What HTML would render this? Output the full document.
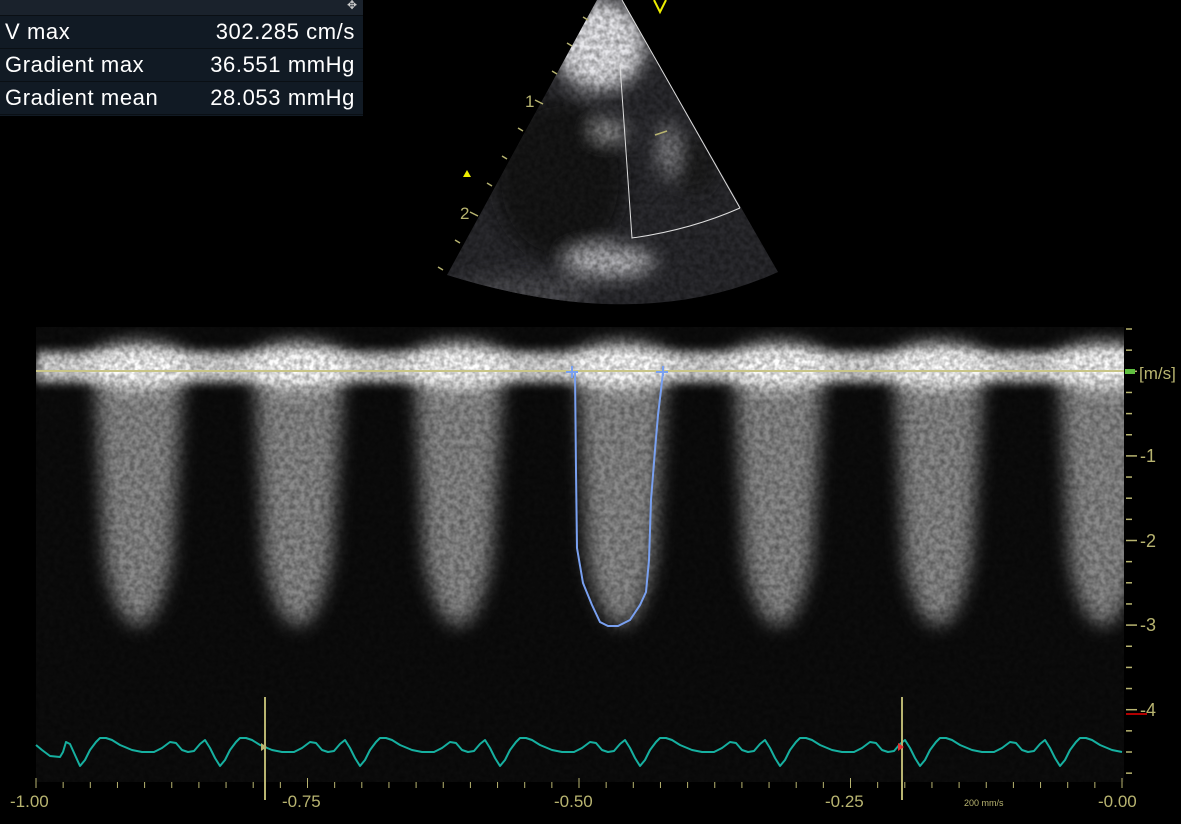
<!DOCTYPE html>
<html><head><meta charset="utf-8">
<style>
html,body{margin:0;padding:0;background:#000;width:1181px;height:824px;overflow:hidden;font-family:"Liberation Sans",sans-serif}
#tbl{position:absolute;left:0;top:0;width:363px;height:116px;background:#111a24}
#tbl .hdr{height:15px;background:#1a222c;border-bottom:1px solid #0a0f14;position:relative}
#tbl .row{height:32px;border-bottom:1px solid #0a0f14;color:#fff;font-size:22px;line-height:32px;position:relative;letter-spacing:0.6px}
#tbl .row span{position:absolute}
#tbl .l{left:5px}#tbl .r{right:8px}
svg{position:absolute;left:0;top:0}
.ax{fill:#b8b470}
</style></head><body>
<svg width="1181" height="824" viewBox="0 0 1181 824">
<defs>
<filter id="bl" x="-20%" y="-20%" width="140%" height="140%"><feGaussianBlur stdDeviation="9"/></filter>
<filter id="bl2" x="-5%" y="-50%" width="110%" height="200%"><feGaussianBlur stdDeviation="5"/></filter>
<filter id="bl3" x="-30%" y="-60%" width="160%" height="220%"><feGaussianBlur stdDeviation="9"/></filter>
<filter id="noise" x="0" y="0" width="100%" height="100%">
<feTurbulence type="fractalNoise" baseFrequency="0.2" numOctaves="2" seed="3"/>
<feColorMatrix type="matrix" values="0 0 0 0 0  0 0 0 0 0  0 0 0 0 0  0 0 0 -1.4 1.0"/>
</filter>
<clipPath id="dop"><rect x="36" y="327" width="1088" height="455"/></clipPath>
<clipPath id="fan"><path d="M597 0 L622 0 L778 272 Q640 335 447 275 Z"/></clipPath>
</defs>
<g clip-path="url(#dop)">
<rect x="36" y="327" width="1088" height="455" fill="#0c0c0c"/>
<g id="peaks" fill="#8a8a8a" filter="url(#bl)"></g>
<rect x="36" y="352" width="1088" height="30" fill="#fff" filter="url(#bl2)" opacity="0.85"/>
<g id="tops" fill="#fff" filter="url(#bl3)"></g>
<rect x="36" y="327" width="1088" height="455" filter="url(#noise)" opacity="0.45"/>
</g>
<line x1="36" y1="371" x2="1124" y2="371" stroke="#c8c488" stroke-width="2"/>
<path d="M575 372 L576 470 L577 548 L583 583 L592 605 L600 622 L608 626 L618 626 L630 620 L640 605 L646 592 L649 560 L651 500 L655 450 L658 415 L661 390 L663 372" fill="none" stroke="#79a0f0" stroke-width="2"/>
<path d="M566 372 h12 M572 366 v12 M656 372 h12 M663 366 v10" stroke="#79a0f0" stroke-width="2"/>
<g id="rt" stroke="#b8b470" stroke-width="1.5"></g>
<rect x="1125" y="369" width="10" height="5" fill="#5fbf3f"/>
<line x1="1126" y1="714" x2="1147" y2="714" stroke="#e00" stroke-width="1.5"/>
<text x="1139" y="379" class="ax" style="font-size:17px">[m/s]</text>
<text x="1140" y="462" class="ax" style="font-size:18px">-1</text>
<text x="1140" y="547" class="ax" style="font-size:18px">-2</text>
<text x="1140" y="631" class="ax" style="font-size:18px">-3</text>
<text x="1140" y="716" class="ax" style="font-size:18px">-4</text>
<path id="ecg" fill="none" stroke="#16b0a0" stroke-width="2" stroke-linejoin="round"/>
<g id="bt" stroke="#b8b470" stroke-width="1"></g>
<line x1="265" y1="697" x2="265" y2="800" stroke="#b8b470" stroke-width="2"/>
<line x1="902" y1="697" x2="902" y2="800" stroke="#b8b470" stroke-width="2"/>
<path d="M261 743 l6 4 l-6 4z" fill="#b8b470"/>
<path d="M898 743 l6 4 l-6 4z" fill="#e03030"/>
<text x="10" y="807" class="ax" style="font-size:17px">-1.00</text>
<text x="282" y="807" class="ax" style="font-size:17px">-0.75</text>
<text x="554" y="807" class="ax" style="font-size:17px">-0.50</text>
<text x="825" y="807" class="ax" style="font-size:17px">-0.25</text>
<text x="1098" y="807" class="ax" style="font-size:17px">-0.00</text>
<text x="964" y="806" class="ax" style="font-size:9px">200 mm/s</text>
<g clip-path="url(#fan)">
<rect x="440" y="0" width="340" height="320" fill="#2a2a2e"/>
<g filter="url(#bl)">
<ellipse cx="600" cy="45" rx="45" ry="45" fill="#e8e8ec"/>
<ellipse cx="560" cy="180" rx="65" ry="80" fill="#141416"/>
<ellipse cx="695" cy="165" rx="22" ry="30" fill="#1a1a1e"/>
<ellipse cx="610" cy="262" rx="45" ry="15" fill="#bcbcc0"/>
<ellipse cx="668" cy="150" rx="10" ry="28" fill="#8a8a8e"/>
<ellipse cx="610" cy="130" rx="18" ry="8" fill="#aaa"/>
<ellipse cx="520" cy="295" rx="70" ry="20" fill="#4a4a4e"/>
</g>
<rect x="440" y="0" width="340" height="320" filter="url(#noise)" opacity="0.5"/>
</g>
<path d="M620 65 L632 238 Q690 230 740 208" fill="none" stroke="#ddd" stroke-width="1"/>
<path d="M622 0 L740 208" fill="none" stroke="#ddd" stroke-width="1"/>
<text x="525" y="107" class="ax" style="font-size:17px">1</text>
<text x="460" y="219" class="ax" style="font-size:17px">2</text>
<path d="M463 177 l4 -7 l4 7z" fill="#ee0"/>
<path d="M654 0 L660 12 L666 0" fill="none" stroke="#ee0" stroke-width="2"/>
<g stroke="#b8b470" stroke-width="1.5">
<line x1="583" y1="17" x2="588" y2="20"/><line x1="567" y1="43" x2="572" y2="46"/><line x1="552" y1="71" x2="557" y2="74"/><line x1="535" y1="100" x2="543" y2="104"/><line x1="518" y1="128" x2="523" y2="131"/><line x1="502" y1="156" x2="507" y2="159"/><line x1="487" y1="183" x2="492" y2="186"/><line x1="470" y1="212" x2="478" y2="216"/><line x1="455" y1="240" x2="460" y2="243"/><line x1="438" y1="267" x2="443" y2="270"/>
<line x1="655" y1="135" x2="667" y2="131"/>
</g>
</svg>
<div id="tbl">
<div class="hdr"><span style="position:absolute;right:6px;top:-2px;color:#ccc;font-size:12px">✥</span></div>
<div class="row"><span class="l">V max</span><span class="r">302.285 cm/s</span></div>
<div class="row"><span class="l">Gradient max</span><span class="r">36.551 mmHg</span></div>
<div class="row"><span class="l">Gradient mean</span><span class="r">28.053 mmHg</span></div>
</div>
<script>
var ns="http://www.w3.org/2000/svg";
var pk=document.getElementById('peaks'),tp=document.getElementById('tops');
[95,255,415,578,735,895,1060].forEach(function(x){
var p=document.createElementNS(ns,'path');
var w=88;
p.setAttribute('d','M'+x+' 372 L'+(x+w)+' 372 L'+(x+w-12)+' 560 Q'+(x+w-25)+' 625 '+(x+w/2)+' 625 Q'+(x+22)+' 625 '+(x+10)+' 560 Z');
pk.appendChild(p);
var r=document.createElementNS(ns,'ellipse');r.setAttribute('cx',x+w/2);r.setAttribute('cy',366);r.setAttribute('rx',w/2+8);r.setAttribute('ry',22);tp.appendChild(r);
});
var rt=document.getElementById('rt');
for(var y=329;y<=782;y+=21.15){var l=document.createElementNS(ns,'line');var m=((y-371)%84.6+84.6)%84.6;var maj=m<2||m>82.6;
l.setAttribute('x1',1126);l.setAttribute('x2',maj?1137:1132);l.setAttribute('y1',y);l.setAttribute('y2',y);rt.appendChild(l);}
var bt=document.getElementById('bt');
for(var i=0;i<=40;i++){var x=36+i*27.15;var l=document.createElementNS(ns,'line');l.setAttribute('x1',x);l.setAttribute('x2',x);l.setAttribute('y1',i%10==0?778:782);l.setAttribute('y2',788);bt.appendChild(l);}
var cyc=[[0,18],[5,12],[10,2],[16,-6],[20,-10],[26,-10],[32,-8],[40,-3],[52,2],[62,4],[74,4],[82,0],[90,-6],[96,-5],[102,2],[108,4],[114,3],[120,-4],[125,-8],[130,0],[135,10]];
var d='M36 745 L42 750 L50 756 L60 757 L63 752 L66 742 L70 744 L75 755',P=140;
for(var c=0;c<8;c++){cyc.forEach(function(p){var x=80+c*P+p[0];if(x>1124)return;d+=' L'+x+' '+(748+p[1]);});}
document.getElementById('ecg').setAttribute('d',d);
</script>
</body></html>
